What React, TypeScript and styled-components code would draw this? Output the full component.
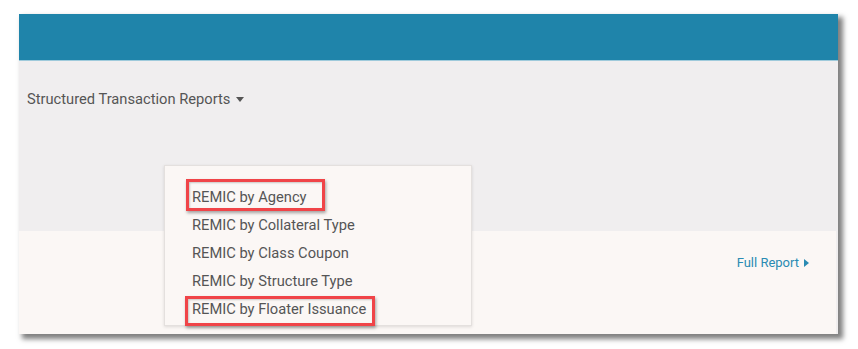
import styled, { createGlobalStyle } from 'styled-components';

const GlobalStyle = createGlobalStyle`
  html, body {
    margin: 0;
    padding: 0;
    background: #ffffff;
  }
  body {
    font-family: Roboto, "Liberation Sans", Arial, sans-serif;
  }
`;

// mark = the hand-drawn red box around an item (offsets from the item's edges)
interface Mark {
  top: number;
  right: number;
  bottom: number;
  left: number;
}

const menuItems: { label: string; mark?: Mark }[] = [
  { label: 'REMIC by Agency', mark: { top: -4, right: -18, bottom: 0, left: -6 } },
  { label: 'REMIC by Collateral Type' },
  { label: 'REMIC by Class Coupon' },
  { label: 'REMIC by Structure Type' },
  { label: 'REMIC by Floater Issuance', mark: { top: 1, right: -9, bottom: -3, left: -7 } },
];

function App() {
  return (
    <>
      <GlobalStyle />
      <Page>
        <Frame>
          <TopBar />
          <Toolbar>
            <MenuTrigger>
              Structured Transaction Reports
              <CaretDown />
            </MenuTrigger>
          </Toolbar>
          <Card>
            <FullReport>
              Full Report
              <CaretRight />
            </FullReport>
          </Card>

          <Dropdown>
            {menuItems.map((item) => (
              <MenuItem key={item.label}>
                {item.label}
                {item.mark && <MarkBox mark={item.mark} />}
              </MenuItem>
            ))}
          </Dropdown>
        </Frame>
      </Page>
    </>
  );
}

const Page = styled.div`
  width: 858px;
  height: 349px;
  padding: 14px 0 0 19px;
  box-sizing: border-box;
`;

const Frame = styled.div`
  position: relative;
  width: 819px;
  height: 320px;
  display: flex;
  flex-direction: column;
  background: #f0eeef;
  box-shadow: 4px 4px 5px 1px rgba(0, 0, 0, 0.5);
`;

const TopBar = styled.div`
  height: 46px;
  background: #1f84aa;
  border-bottom: 1px solid #9fcadb;
  flex-shrink: 0;
`;

const Toolbar = styled.div`
  height: 170px;
  display: flex;
  align-items: flex-start;
  padding: 29px 0 0 8px;
  box-sizing: border-box;
  flex-shrink: 0;
`;

const MenuTrigger = styled.div`
  display: flex;
  align-items: center;
  gap: 6px;
  font-size: 14.7px;
  color: #555555;
`;

const CaretDown = styled.span`
  width: 0;
  height: 0;
  border-left: 4px solid transparent;
  border-right: 4px solid transparent;
  border-top: 5px solid #555555;
`;

const Card = styled.div`
  flex: 1;
  margin-right: 2px;
  background: #fbf7f5;
  display: flex;
  justify-content: flex-end;
  align-items: flex-start;
  padding: 24px 27px 0 0;
  box-sizing: border-box;
`;

const FullReport = styled.a`
  display: flex;
  align-items: center;
  gap: 5px;
  font-size: 13px;
  color: #2a8bb3;
  cursor: pointer;
`;

const CaretRight = styled.span`
  width: 0;
  height: 0;
  border-top: 4px solid transparent;
  border-bottom: 4px solid transparent;
  border-left: 5px solid #2a8bb3;
`;

const Dropdown = styled.ul`
  position: absolute;
  left: 145px;
  top: 151px;
  width: 308px;
  height: 161px;
  margin: 0;
  padding: 17px 0 0 0;
  list-style: none;
  background: #fbf7f5;
  border: 1px solid #e4e0de;
  box-shadow: 0 1px 3px rgba(0, 0, 0, 0.12);
  box-sizing: border-box;
  display: flex;
  flex-direction: column;
`;

const MenuItem = styled.li`
  position: relative;
  align-self: flex-start;
  height: 28px;
  line-height: 28px;
  margin-left: 27px;
  font-size: 14.7px;
  color: #555555;
`;

const MarkBox = styled.span<{ mark: Mark }>`
  position: absolute;
  top: ${(p) => p.mark.top}px;
  right: ${(p) => p.mark.right}px;
  bottom: ${(p) => p.mark.bottom}px;
  left: ${(p) => p.mark.left}px;
  border: 3px solid #f04448;
  box-shadow: 1px 2px 3px rgba(0, 0, 0, 0.35), inset 1px 1px 2px rgba(0, 0, 0, 0.2);
  pointer-events: none;
`;

export default App;
